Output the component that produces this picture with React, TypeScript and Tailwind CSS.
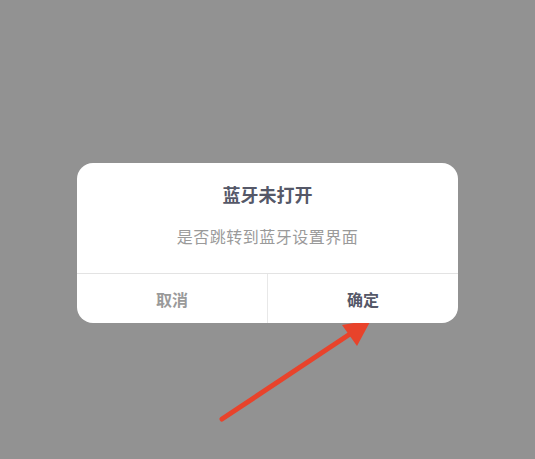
import React from 'react';

const font = { fontFamily: '"Noto Sans CJK SC", "Noto Sans", sans-serif' };

// annotation arrow pointing at the confirm button
const Arrow = () => (
  <svg className="absolute inset-0 pointer-events-none" width="535" height="459" viewBox="0 0 535 459">
    <line x1="222" y1="419" x2="356" y2="330" stroke="#e8432b" strokeWidth="5" strokeLinecap="round" />
    <polygon points="371,320 342,325 357,346" fill="#e8432b" />
  </svg>
);

const App = () => {
  return (
    <div className="relative w-[535px] h-[459px] bg-[#929292] overflow-hidden" style={font}>
      <Arrow />
      <div className="relative flex flex-col items-center pt-[163px]">
        <div className="w-[381px] bg-white rounded-[16px] overflow-hidden">
          <div className="pt-[19px] pb-[25px] text-center">
            <h2 className="text-[18px] leading-[24px] font-bold text-[#555868]">蓝牙未打开</h2>
            <p className="mt-[18px] text-[16px] leading-[24px] text-[#9a9a9a] tracking-[0.5px]">是否跳转到蓝牙设置界面</p>
          </div>
          <div className="flex h-[50px] border-t border-[#e3e3e3]">
            <button className="flex-1 text-[16px] font-bold text-[#9a9a9a] border-r border-[#e8e8e8]">取消</button>
            <button className="flex-1 text-[16px] font-bold text-[#555868]">确定</button>
          </div>
        </div>
      </div>
    </div>
  );
};

export default App;
